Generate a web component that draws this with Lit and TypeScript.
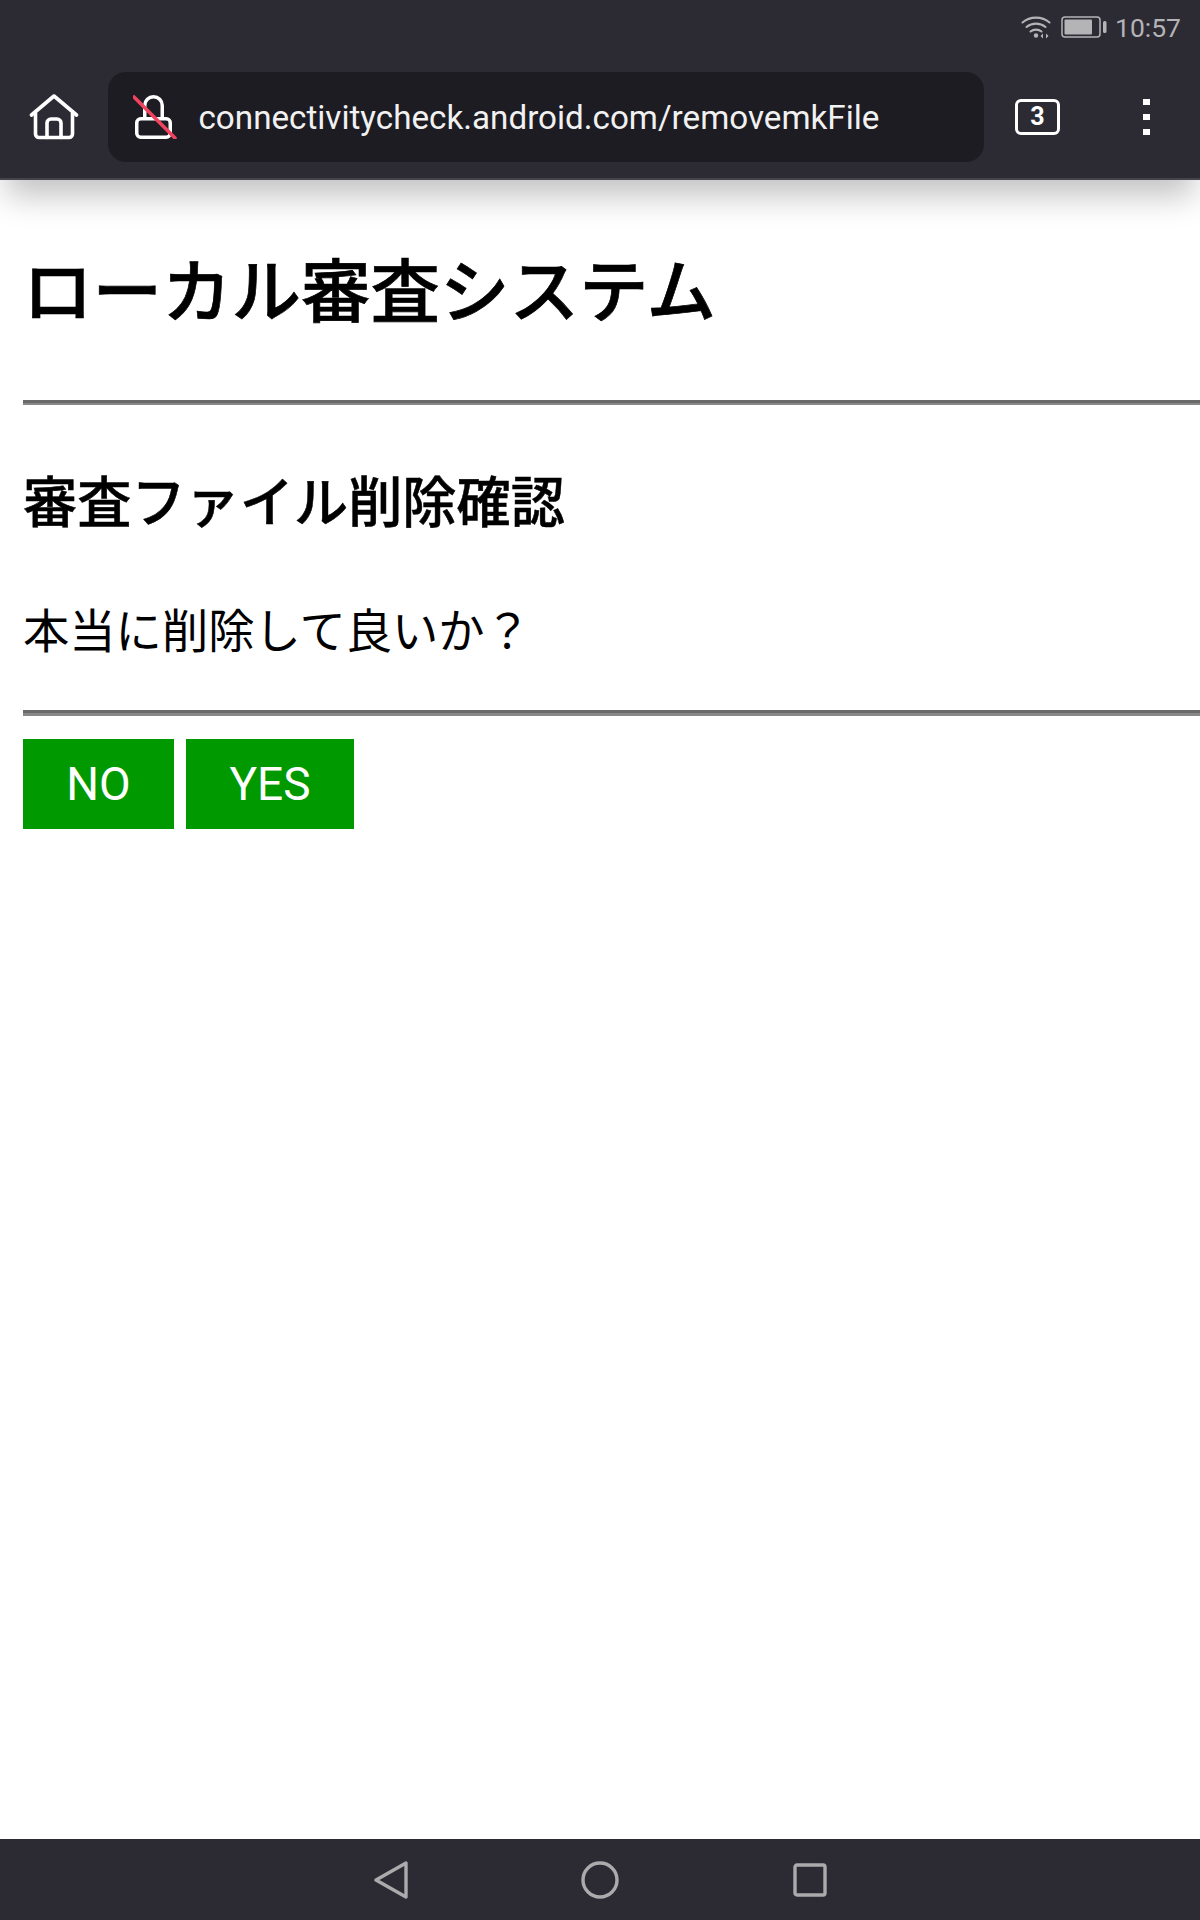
import { LitElement, html, css } from "lit";
import { customElement } from "lit/decorators.js";

@customElement("app-root")
export class AppRoot extends LitElement {
  static styles = css`
    :host { display: flex; flex-direction: column; width: 1200px; height: 1920px; background: #fff; overflow: hidden;
      font-family: "Noto Sans CJK JP", "Noto Sans", sans-serif; color: #000; }
    .chrome { background: #2c2b34; border-bottom: 2px solid #45444c; box-shadow: 0 22px 30px -6px rgba(0,0,0,.24); position: relative; z-index: 1; flex: none; }
    .status { height: 50px; display: flex; align-items: center; justify-content: flex-end; padding: 4px 19px 0 0; box-sizing: border-box; color: #b4b4b7; font: 26.500px Roboto, sans-serif; }
    .status .wifi { margin-right: 10px; }
    .status .batt { margin-right: 8px; }
    .toolbar { height: 128px; display: flex; align-items: flex-start; box-sizing: border-box; padding-top: 22px; }
    .home { width: 108px; height: 90px; display: flex; align-items: center; justify-content: center; flex: none; }
    .urlbar { width: 876px; height: 90px; background: #1d1c22; border-radius: 18px; display: flex; align-items: center; box-sizing: border-box; padding-left: 25px; flex: none; }
    .url { margin-left: 21.500px; color: #f1f1f2; font: 33.200px Roboto, sans-serif; white-space: nowrap; }
    .tabs { margin: 27px 0 0 31px; width: 45px; height: 36px; box-sizing: border-box; border: 3.500px solid #fff; border-radius: 6px; color: #fff; font: 700 25px/29px Roboto, sans-serif; text-align: center; flex: none; }
    .dots { margin: 27px 0 0 83px; display: flex; flex-direction: column; gap: 9px; flex: none; }
    .dots i { display: block; width: 6.500px; height: 6px; background: #fff; }
    main { flex: 1; min-height: 0; padding: 0 0 0 23px; }
    h1 { margin: 0; padding-top: 67px; height: 153px; font-size: 69.500px; line-height: 80px; font-weight: 500; -webkit-text-stroke: 0.700px #000; white-space: nowrap; }
    hr { margin: 0; height: 5px; border: none; border-top: 3px solid #6a6a6a; border-bottom: 2px solid #888; box-sizing: border-box; }
    hr.thick { height: 6px; border-bottom-width: 3px; }
    h2 { margin: 0; padding-top: 56px; height: 90px; font-size: 54.200px; line-height: 76px; font-weight: 500; -webkit-text-stroke: 0.500px #000; white-space: nowrap; }
    p { margin: 0; padding-top: 43px; height: 116px; font-size: 46.300px; line-height: 68px; white-space: nowrap; }
    .btns { display: flex; gap: 12px; margin-top: 23px; }
    .btn { height: 90px; background: #009900; color: #fff; display: flex; align-items: center; justify-content: center; font: 46px Roboto, sans-serif; }
    .no { width: 151px; }
    .yes { width: 168px; }
    nav { height: 81px; flex: none; background: #2c2b34; display: flex; justify-content: center; align-items: center; }
    nav svg { display: block; }
    .gap { width: 173.500px; flex: none; }
  `;

  render() {
    return html`
      <div class="chrome">
        <div class="status">
          <svg class="wifi" width="30" height="24" viewBox="0 0 30 24" fill="none" stroke="#b4b4b7" stroke-width="2.100" stroke-linecap="round">
            <path d="M1.500 7.500C9 1 21 1 28.500 7.500"/><path d="M5.500 12C11 7.500 19 7.500 24.500 12"/><path d="M9.500 16.500C12.500 14 17.500 14 20.500 16.500"/>
            <circle cx="15" cy="20.500" r="2.200" fill="#b4b4b7" stroke="none"/>
            <path d="M22 18.500v5l-2.500-2.500z M25 18.500v5l2.500-2.500z" fill="#b4b4b7" stroke="none"/>
          </svg>
          <svg class="batt" width="46" height="22" viewBox="0 0 46 22">
            <rect x="1" y="1" width="38" height="20" rx="3" fill="none" stroke="#b4b4b7" stroke-width="1.500"/>
            <rect x="3.500" y="3.500" width="27.500" height="15" rx="1" fill="#b4b4b7"/>
            <rect x="42" y="5" width="3.500" height="12" rx="1.500" fill="#b4b4b7"/>
          </svg>
          <span>10:57</span>
        </div>
        <div class="toolbar">
          <div class="home">
            <svg width="50" height="46" viewBox="0 0 50 46" fill="none" stroke="#fff" stroke-width="3.600" stroke-linecap="round" stroke-linejoin="round">
              <path d="M2.500 21 25 2 47.500 21"/>
              <path d="M6.500 19v21a3.500 3.500 0 0 0 3.500 3.500h30a3.500 3.500 0 0 0 3.500-3.500V19"/>
              <path d="M18 43.500V29a4 4 0 0 1 4-4h6a4 4 0 0 1 4 4v14.500"/>
            </svg>
          </div>
          <div class="urlbar">
            <svg width="44" height="44" viewBox="0 0 44 44" fill="none" stroke-linecap="round">
              <path d="M11.750 23V10.500a8.750 8.750 0 0 1 17.500 0V23" stroke="#fff" stroke-width="3.500"/>
              <rect x="3.750" y="23.750" width="33.500" height="18.500" rx="4" stroke="#fff" stroke-width="3.500"/>
              <path d="M1 2 42 43" stroke="#f0435e" stroke-width="3.600"/>
            </svg>
            <span class="url">connectivitycheck.android.com/removemkFile</span>
          </div>
          <div class="tabs">3</div>
          <div class="dots"><i></i><i></i><i></i></div>
        </div>
      </div>
      <main>
        <h1>ローカル審査システム</h1>
        <hr />
        <h2>審査ファイル削除確認</h2>
        <p>本当に削除して良いか？</p>
        <hr class="thick" />
        <div class="btns">
          <div class="btn no">NO</div>
          <div class="btn yes">YES</div>
        </div>
      </main>
      <nav>
        <svg width="34" height="38" viewBox="0 0 34 38" fill="none" stroke="#ababad" stroke-width="3.400" stroke-linejoin="round">
          <path d="M2 19 32 2V36Z"/>
        </svg>
        <div class="gap"></div>
        <svg width="38" height="38" viewBox="0 0 38 38" fill="none" stroke="#ababad" stroke-width="3.400">
          <circle cx="19" cy="19" r="17"/>
        </svg>
        <div class="gap"></div>
        <svg width="34" height="34" viewBox="0 0 34 34" fill="none" stroke="#ababad" stroke-width="3.400" stroke-linejoin="round">
          <rect x="2" y="2" width="30" height="30" rx="2"/>
        </svg>
      </nav>
    `;
  }
}
